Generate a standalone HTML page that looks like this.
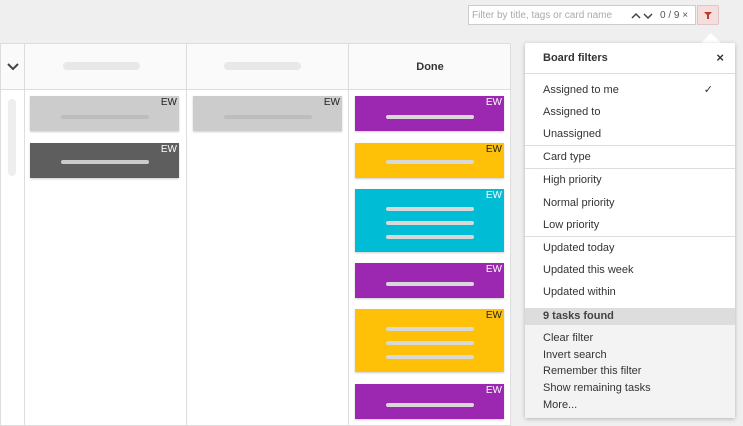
<!DOCTYPE html>
<html><head><style>
*{margin:0;padding:0;box-sizing:border-box}
body{width:743px;height:426px;overflow:hidden;background:#efefef;font-family:"Liberation Sans",Arial,sans-serif;position:relative}
.a{position:absolute}
.board{left:0;top:43px;width:511px;height:383px;background:#fff;border:1px solid #ddd}
.hdr{top:0;height:46px;border-bottom:1px solid #ddd;background:#fafafa}
.vl{top:0;bottom:0;width:1px;background:#ddd}
.pill{height:8px;border-radius:4px;background:#e8e8e8}
.card{width:149px;box-shadow:0 1px 2px rgba(0,0,0,.2)}
.ew{position:absolute;right:2px;top:1px;font-size:10px;color:#222}
.ln{position:absolute;left:31px;width:88px;height:4px;border-radius:2px;background:#d8d8d8}
.panel{left:525px;top:43px;width:210px;height:375px;background:#fff;box-shadow:0 1px 4px rgba(0,0,0,.25);border-radius:2px;font-size:11px;color:#333}
.it{position:absolute;left:18px;top:1px}
.dv{position:absolute;left:0;right:0;height:1px;background:#ddd}
</style></head><body>
<div class="a" style="left:468px;top:5px;width:158px;height:20px;background:#fff;border:1px solid #ccc;font-size:10px;color:#aaa;padding:4px 3px">Filter by title, tags or card name</div>
<div class="a" style="left:625px;top:5px;width:71px;height:20px;background:#fff;border:1px solid #ccc;border-left:none;font-size:10px;color:#555"><svg class="a" style="left:6px;top:5px" width="26" height="10"><path d="M1 7l4-4 4 4M13 3l4 4 4-4" stroke="#444" stroke-width="1.5" fill="none"/></svg><span class="a" style="left:35px;top:4px">0 / 9 ×</span></div>
<div class="a" style="left:697px;top:5px;width:22px;height:20px;background:#f4dede;border:1px solid #e2c4c4;border-radius:0 2px 2px 0"><svg width="20" height="18"><path d="M6 6h8l-3 3v4h-2v-4z" fill="#c0392b"/></svg></div>
<div class="a" style="left:701px;top:33px;width:0;height:0;border-left:10px solid transparent;border-right:10px solid transparent;border-bottom:10px solid #fff"></div>

<div class="a board">
 <div class="a hdr" style="left:0;right:0"></div>
 <div class="a vl" style="left:23px"></div><div class="a vl" style="left:185px"></div><div class="a vl" style="left:347px"></div>
 <svg class="a" style="left:6px;top:19px" width="12" height="8"><path d="M1 1l5 5 5-5" stroke="#444" stroke-width="2" fill="none"/></svg>
 <div class="a pill" style="left:62px;top:18px;width:77px"></div>
 <div class="a pill" style="left:223px;top:18px;width:77px"></div>
 <div class="a" style="left:348px;top:17px;width:162px;text-align:center;font-size:11px;font-weight:bold;color:#333">Done</div>
 <div class="a" style="left:7px;top:55px;width:8px;height:77px;border-radius:4px;background:#eee"></div>
</div>

<div class="a card" style="left:30px;top:96px;height:35px;background:#ccc"><span class="ew">EW</span><div class="ln" style="top:19px;background:#bdbdbd"></div></div>
<div class="a card" style="left:30px;top:143px;height:35px;background:#5e5e5e"><span class="ew" style="color:#fff">EW</span><div class="ln" style="top:17px;background:#ccc"></div></div>
<div class="a card" style="left:193px;top:96px;height:35px;background:#ccc"><span class="ew">EW</span><div class="ln" style="top:19px;background:#bdbdbd"></div></div>

<div class="a card" style="left:355px;top:96px;height:35px;background:#9c27b0"><span class="ew" style="color:#fff">EW</span><div class="ln" style="top:19px"></div></div>
<div class="a card" style="left:355px;top:143px;height:35px;background:#ffc107"><span class="ew">EW</span><div class="ln" style="top:17px"></div></div>
<div class="a card" style="left:355px;top:189px;height:63px;background:#00bcd4"><span class="ew" style="color:#fff">EW</span><div class="ln" style="top:18px"></div><div class="ln" style="top:32px"></div><div class="ln" style="top:46px"></div></div>
<div class="a card" style="left:355px;top:263px;height:35px;background:#9c27b0"><span class="ew" style="color:#fff">EW</span><div class="ln" style="top:19px"></div></div>
<div class="a card" style="left:355px;top:309px;height:63px;background:#ffc107"><span class="ew">EW</span><div class="ln" style="top:18px"></div><div class="ln" style="top:32px"></div><div class="ln" style="top:46px"></div></div>
<div class="a card" style="left:355px;top:384px;height:35px;background:#9c27b0"><span class="ew" style="color:#fff">EW</span><div class="ln" style="top:19px"></div></div>

<div class="a panel">
 <div class="it" style="top:9px;font-weight:bold">Board filters</div>
 <div class="a" style="right:11px;top:7px;font-weight:bold;font-size:13px">×</div>
 <div class="dv" style="top:30px"></div>
 <div class="it" style="top:41px">Assigned to me</div><div class="a" style="right:22px;top:40px">✓</div>
 <div class="it" style="top:63px">Assigned to</div>
 <div class="it" style="top:85px">Unassigned</div>
 <div class="dv" style="top:102px"></div>
 <div class="it" style="top:108px">Card type</div>
 <div class="dv" style="top:125px"></div>
 <div class="it" style="top:131px">High priority</div>
 <div class="it" style="top:154px">Normal priority</div>
 <div class="it" style="top:176px">Low priority</div>
 <div class="dv" style="top:193px"></div>
 <div class="it" style="top:199px">Updated today</div>
 <div class="it" style="top:221px">Updated this week</div>
 <div class="it" style="top:243px">Updated within</div>
 <div class="a" style="left:0;right:0;top:265px;height:110px;background:#f3f3f3"></div>
 <div class="a" style="left:0;right:0;top:265px;height:17px;background:#ddd"></div>
 <div class="it" style="top:267px;font-weight:bold;color:#444">9 tasks found</div>
 <div class="it" style="top:289px">Clear filter</div>
 <div class="it" style="top:306px">Invert search</div>
 <div class="it" style="top:322px">Remember this filter</div>
 <div class="it" style="top:339px">Show remaining tasks</div>
 <div class="it" style="top:356px">More...</div>
</div>
</body></html>
